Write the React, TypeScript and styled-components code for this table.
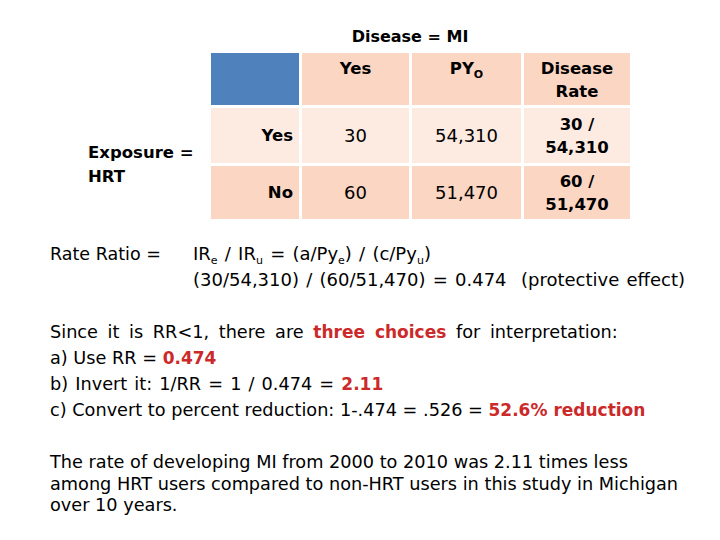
import styled, { createGlobalStyle } from "styled-components";

const GlobalStyle = createGlobalStyle`
  html, body {
    margin: 0;
    padding: 0;
    background: #ffffff;
  }
  body {
    font-family: "DejaVu Sans", "Liberation Sans", sans-serif;
    color: #000000;
  }
`;

const Page = styled.div`
  width: 720px;
  height: 540px;
  box-sizing: border-box;
  padding: 26px 0 0 50px;
  font-size: 18px;
`;

const Title = styled.div`
  width: 418px;
  margin-left: 151px;
  text-align: center;
  font-size: 16px;
  font-weight: bold;
  line-height: 22px;
  margin-bottom: 5px;
`;

const TopSection = styled.div`
  display: flex;
  align-items: stretch;
`;

const ExposureLabel = styled.div`
  width: 161px;
  box-sizing: border-box;
  padding: 57px 0 0 38px;
  font-size: 16.5px;
  font-weight: bold;
  line-height: 24px;
  display: flex;
  align-items: center;
`;

const Table = styled.div`
  display: grid;
  grid-template-columns: 88px 107px 109px 106px;
  grid-template-rows: 52px 55px 53px;
  gap: 3px;
`;

const Cell = styled.div<{ $tone: "blue" | "dark" | "light"; $head?: boolean; $right?: boolean; $bold?: boolean }>`
  background: ${p => (p.$tone === "blue" ? "#4f81bd" : p.$tone === "dark" ? "#fbd6c3" : "#fdeae1")};
  display: flex;
  flex-direction: column;
  justify-content: ${p => (p.$head ? "flex-start" : "center")};
  align-items: ${p => (p.$right ? "flex-end" : "center")};
  padding: ${p => (p.$head ? "4px 6px 0" : "0 6px")};
  text-align: center;
  line-height: 23px;
  font-size: ${p => (p.$bold ? "16.5px" : "18px")};
  font-weight: ${p => (p.$bold ? "bold" : "normal")};
`;

const Sub = styled.sub`
  font-size: 11px;
  vertical-align: -4px;
  line-height: 0;
`;

const RatioRow = styled.div`
  display: flex;
  margin-top: 22px;
  line-height: 26px;
`;

const RatioLabel = styled.div`
  width: 143px;
  font-size: 17.5px;
`;

const Formula = styled.div`
  word-spacing: 1.5px;
`;

const Choices = styled.div`
  margin-top: 26px;
  line-height: 26px;
  font-size: 17.7px;
`;

const Line = styled.div<{ $spread?: number }>`
  word-spacing: ${p => p.$spread || 0}px;
`;

const Red = styled.span<{ $weight?: string }>`
  color: #cc2a2a;
  font-size: 17px;
  font-weight: ${p => p.$weight || "bold"};
`;

const Summary = styled.p`
  margin: 29px 0 0;
  font-size: 17.7px;
  line-height: 21.5px;
`;

export default function App() {
  return (
    <Page>
      <GlobalStyle />
      <Title>Disease = MI</Title>
      <TopSection>
        <ExposureLabel>
          Exposure =<br />HRT
        </ExposureLabel>
        <Table>
          <Cell $tone="blue" />
          <Cell $tone="dark" $head $bold>Yes</Cell>
          <Cell $tone="dark" $head $bold>
            <span>PY<Sub>O</Sub></span>
          </Cell>
          <Cell $tone="dark" $head $bold>
            Disease<br />Rate
          </Cell>

          <Cell $tone="light" $right $bold>Yes</Cell>
          <Cell $tone="light">30</Cell>
          <Cell $tone="light">54,310</Cell>
          <Cell $tone="light" $bold>
            30 /<br />54,310
          </Cell>

          <Cell $tone="dark" $right $bold>No</Cell>
          <Cell $tone="dark">60</Cell>
          <Cell $tone="dark">51,470</Cell>
          <Cell $tone="dark" $bold>
            60 /<br />51,470
          </Cell>
        </Table>
      </TopSection>

      <RatioRow>
        <RatioLabel>Rate Ratio =</RatioLabel>
        <Formula>
          IR<Sub>e</Sub> / IR<Sub>u</Sub> = (a/Py<Sub>e</Sub>) / (c/Py<Sub>u</Sub>)
          <br />
          (30/54,310) / (60/51,470) = 0.474&nbsp; (protective effect)
        </Formula>
      </RatioRow>

      <Choices>
        <Line $spread={4}>
          Since it is RR&lt;1, there are <Red $weight="600">three choices</Red> for interpretation:
        </Line>
        <Line>
          a) Use RR = <Red>0.474</Red>
        </Line>
        <Line $spread={1.5}>
          b) Invert it: 1/RR = 1 / 0.474 = <Red>2.11</Red>
        </Line>
        <Line>
          c) Convert to percent reduction: 1-.474 = .526 = <Red>52.6% reduction</Red>
        </Line>
      </Choices>

      <Summary>
        The rate of developing MI from 2000 to 2010 was 2.11 times less
        <br />
        among HRT users compared to non-HRT users in this study in Michigan
        <br />
        over 10 years.
      </Summary>
    </Page>
  );
}
